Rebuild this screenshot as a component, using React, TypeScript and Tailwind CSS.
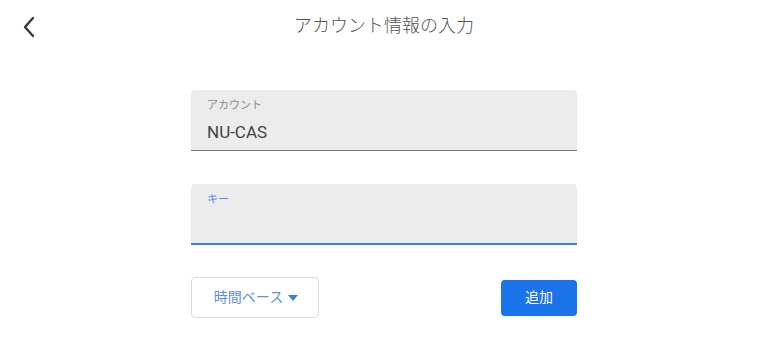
import React from "react";

export default function App() {
  return (
    <div className="w-[768px] h-[343px] bg-white relative" style={{ fontFamily: "Roboto, 'Noto Sans CJK JP', sans-serif" }}>
      <div className="h-[50px] flex items-center justify-center relative">
        <button className="absolute left-[18px] top-[14px] w-[22px] h-[26px] flex items-center justify-center text-[#333]">
          <svg width="14" height="22" viewBox="0 0 14 22" fill="none">
            <path d="M11 2 L3 11 L11 20" stroke="#3a3a3a" strokeWidth="2.4" strokeLinecap="round" strokeLinejoin="round" />
          </svg>
        </button>
        <h1 className="text-[18px] font-light text-[#555555] mt-[1px]">アカウント情報の入力</h1>
      </div>
      <div className="w-[386px] mx-auto mt-[40px]">
        <div className="h-[61px] bg-[#ececec] rounded-t-[4px] border-b border-[#7a7a7a] px-[16px] pt-[9px]">
          <div className="text-[11px] text-[#8a8a8a] leading-[14px]">アカウント</div>
          <div className="text-[17px] text-[#444444] leading-[20px] mt-[9px]">NU-CAS</div>
        </div>
        <div className="h-[61px] bg-[#ececec] rounded-t-[4px] border-b-2 border-[#3b7de9] px-[16px] pt-[9px] mt-[33px]">
          <div className="text-[11px] text-[#4f8ef0] leading-[14px]">キー</div>
        </div>
        <div className="flex items-center justify-between mt-[32px]">
          <button className="w-[128px] h-[41px] border border-[#dcdcdc] rounded-[4px] flex items-center justify-center gap-[5px] text-[14px] text-[#5b8fe8] pl-[2px]">
            時間ベース
            <svg width="10" height="6" viewBox="0 0 10 6"><path d="M0 0 L10 0 L5 6 Z" fill="#3b7de9" /></svg>
          </button>
          <button className="w-[76px] h-[36px] bg-[#1a73e8] rounded-[4px] text-white text-[14px] flex items-center justify-center">追加</button>
        </div>
      </div>
    </div>
  );
}
